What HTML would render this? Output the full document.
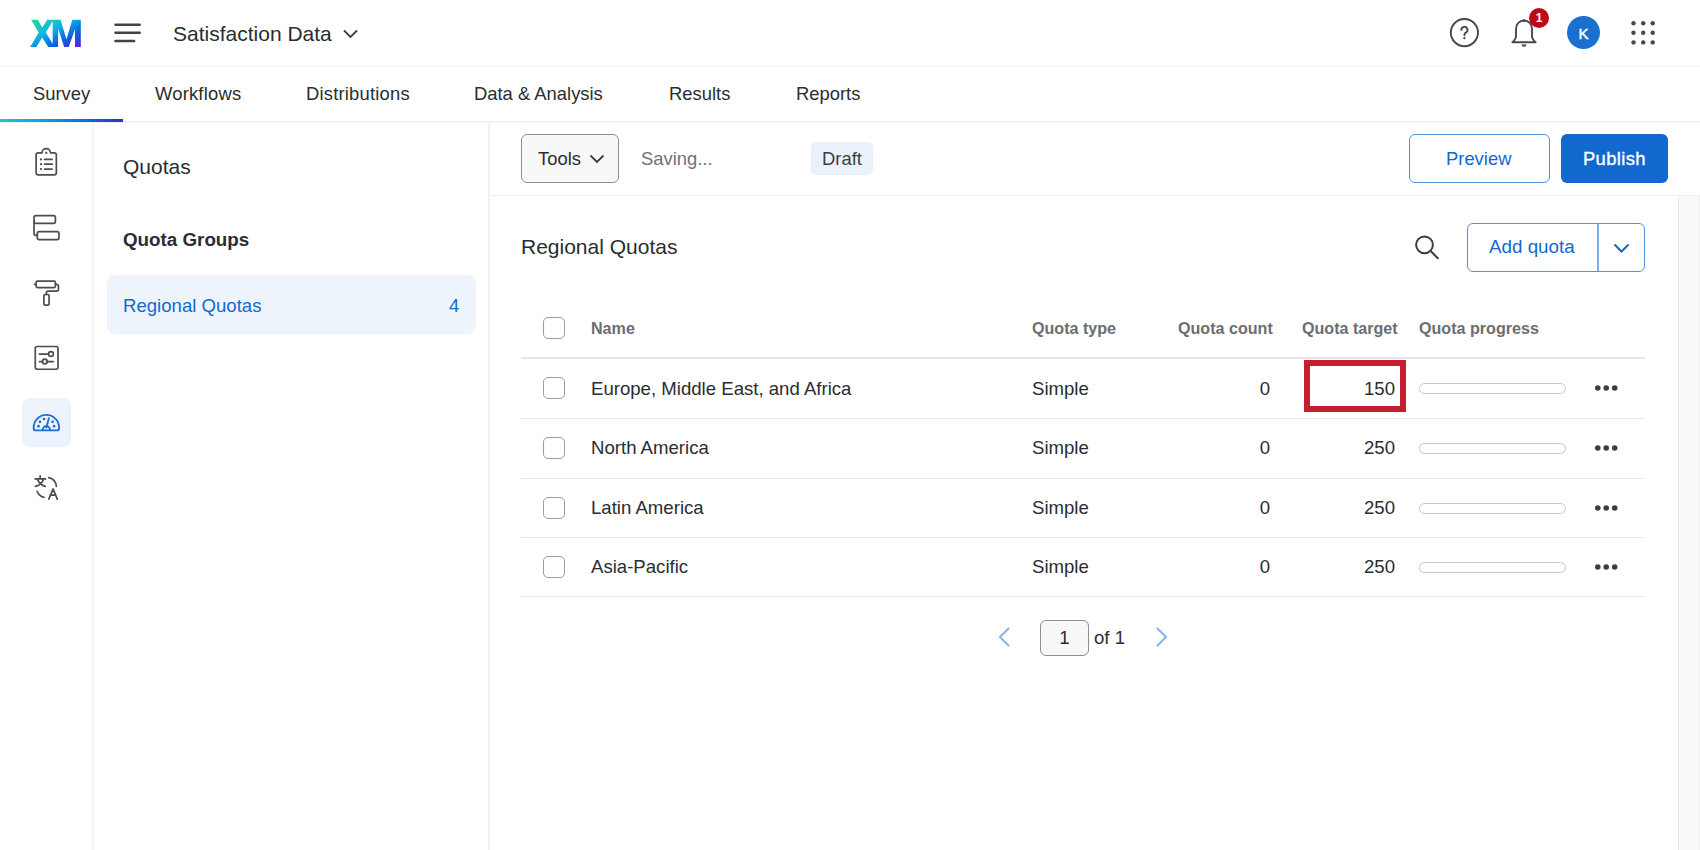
<!DOCTYPE html>
<html><head><meta charset="utf-8">
<style>
*{box-sizing:border-box;margin:0;padding:0}
html,body{width:1700px;height:850px;overflow:hidden;background:#fff;font-family:"Liberation Sans",sans-serif;color:#2a2d31}
.a{position:absolute}
.t{position:absolute;white-space:nowrap;line-height:1}
.hl{position:absolute;height:1px;background:#e9e9ea}
.vl{position:absolute;width:1px;background:#ececec}
svg{position:absolute;overflow:visible}
.cb{width:22px;height:22px;border:1.5px solid #9a9da1;border-radius:5px;background:#fff}
.th{font-size:16.1px;font-weight:700;color:#6b6e72}
.td{font-size:18.6px;color:#2a2d31}
.pb{position:absolute;left:1419px;width:147px;height:11px;border:1px solid #c6c7c9;border-radius:6px;background:#fff}
</style></head><body>
<!-- structural lines -->
<div class="hl" style="left:0;top:65px;width:1700px;height:2px;background:#f5f7f7"></div>
<div class="hl" style="left:0;top:121px;width:1700px;height:2px;background:#f2f2f2"></div>
<div class="a" style="left:0;top:119px;width:123px;height:3px;background:linear-gradient(90deg,#1fc7c9,#05a9ea 30%,#0a6fe0 70%,#3a2bc0)"></div>
<div class="vl" style="left:92px;top:122px;height:728px;width:2px;background:#f4f6f6"></div>
<div class="vl" style="left:488px;top:122px;height:728px;width:2px;background:#f2f2f2"></div>
<div class="hl" style="left:490px;top:195px;width:1210px;background:#efefef"></div>
<div class="a" style="left:1678px;top:196px;width:22px;height:654px;background:#f9f9f9;border-left:1px solid #e8e8e8;border-right:1px solid #efefef"></div>

<!-- header -->
<svg style="left:28px;top:17px" width="56" height="33" viewBox="0 0 1442 850">
<defs><linearGradient id="xmg" x1="0" y1="0" x2="1" y2="1">
<stop offset="0" stop-color="#22dc92"/><stop offset="0.4" stop-color="#0bb5e6"/><stop offset="0.7" stop-color="#0a62de"/><stop offset="1" stop-color="#5a1ee6"/></linearGradient></defs>
<path fill="url(#xmg)" fill-rule="evenodd" d="M80 70 L250 70 L370 270 L495 70 L840 70 L990 580 L1140 70 L1360 70 L1360 770 L1210 770 L1210 310 L1050 770 L930 770 L775 290 L775 770 L520 770 L365 530 L215 770 L55 770 L275 400 Z M460 400 L635 105 L635 690 Z"/>
</svg>
<svg style="left:112px;top:22px" width="32" height="22" viewBox="0 0 32 22">
<path d="M3.5 2.7H27.7M3.5 10.7H27.7M3.5 19H22.1" stroke="#404347" stroke-width="2.5" stroke-linecap="round" fill="none"/>
</svg>
<div class="t" style="left:173px;top:23px;font-size:21px;color:#2a2d31">Satisfaction Data</div>
<svg style="left:343px;top:29px" width="16" height="10" viewBox="0 0 16 10"><path d="M1 1.5L7.5 8L14 1.5" stroke="#3b3e42" stroke-width="1.8" fill="none"/></svg>

<!-- help -->
<svg style="left:1449px;top:18px" width="30" height="30" viewBox="0 0 30 30">
<circle cx="15.4" cy="14.6" r="13.6" stroke="#45484c" stroke-width="1.9" fill="none"/>
<path d="M12.3 11.9a3.1 3.1 0 1 1 4.6 2.7c-1 .5-1.5 1.1-1.5 2.1v.5" stroke="#45484c" stroke-width="1.9" fill="none" stroke-linecap="round"/>
<circle cx="15.4" cy="20.2" r="1.15" fill="#45484c"/>
</svg>
<!-- bell -->
<svg style="left:1510px;top:17px" width="30" height="32" viewBox="0 0 30 32">
<path d="M14 3.5c-4.6 0-8 3.6-8 8.4v6.6c0 2.2-1.6 5.2-3.6 6.7h23.2c-2-1.5-3.6-4.5-3.6-6.7v-6.6c0-4.8-3.4-8.4-8-8.4z" stroke="#45484c" stroke-width="1.9" fill="none" stroke-linejoin="round"/>
<path d="M11.5 27.5a2.5 2.2 0 0 0 5 0z" fill="#45484c"/>
<circle cx="14" cy="3.6" r="1.3" fill="#45484c"/>
</svg>
<div class="a" style="left:1529px;top:8px;width:20px;height:20px;border-radius:50%;background:#bc0b14"></div>
<div class="t" style="left:1529px;top:12px;width:20px;text-align:center;font-size:12px;font-weight:700;color:#fff">1</div>
<div class="a" style="left:1567px;top:16px;width:33px;height:33px;border-radius:50%;background:#1b6fce"></div>
<div class="t" style="left:1567px;top:26px;width:33px;text-align:center;font-size:15px;color:#fff;-webkit-text-stroke:0.5px #fff">K</div>
<svg style="left:1628px;top:18px" width="30" height="30" viewBox="0 0 30 30" fill="#45484c">
<circle cx="5.5" cy="5.3" r="2.2"/><circle cx="15.2" cy="5.3" r="2.2"/><circle cx="24.7" cy="5.3" r="2.2"/>
<circle cx="5.5" cy="14.8" r="2.2"/><circle cx="15.2" cy="14.8" r="2.2"/><circle cx="24.7" cy="14.8" r="2.2"/>
<circle cx="5.5" cy="24.4" r="2.2"/><circle cx="15.2" cy="24.4" r="2.2"/><circle cx="24.7" cy="24.4" r="2.2"/>
</svg>

<!-- tabs -->
<div class="t" style="left:33px;top:85px;font-size:18.4px">Survey</div>
<div class="t" style="left:155px;top:85px;font-size:18.4px;letter-spacing:0.2px">Workflows</div>
<div class="t" style="left:306px;top:85px;font-size:18.4px;letter-spacing:0.2px">Distributions</div>
<div class="t" style="left:474px;top:85px;font-size:18.4px">Data &amp; Analysis</div>
<div class="t" style="left:669px;top:85px;font-size:18.4px">Results</div>
<div class="t" style="left:796px;top:85px;font-size:18.4px">Reports</div>

<!-- left rail icons -->
<svg style="left:26px;top:142px" width="40" height="40" viewBox="0 0 850 850" fill="none" stroke="#4a4d51" stroke-width="36" stroke-linecap="round" stroke-linejoin="round">
<path d="M340 230H262Q215 230 215 277V653Q215 700 262 700H598Q645 700 645 653V277Q645 230 598 230H520A90 90 0 0 0 340 230Z"/>
<path d="M395 370H555M395 472H555M395 575H555"/>
<g fill="#4a4d51" stroke="none"><circle cx="432" cy="232" r="24"/><circle cx="318" cy="370" r="24"/><circle cx="318" cy="472" r="24"/><circle cx="318" cy="575" r="24"/></g>
</svg>
<svg style="left:26px;top:207px" width="40" height="40" viewBox="0 0 850 850" fill="none" stroke="#4a4d51" stroke-width="36" stroke-linecap="round" stroke-linejoin="round">
<rect x="170" y="185" width="455" height="165" rx="40"/>
<rect x="240" y="525" width="460" height="170" rx="40"/>
<path d="M170 300V560Q170 605 215 605H240"/>
</svg>
<svg style="left:26px;top:272px" width="40" height="40" viewBox="0 0 850 850" fill="none" stroke="#4a4d51" stroke-width="36" stroke-linecap="round" stroke-linejoin="round">
<rect x="215" y="192" width="410" height="138" rx="28"/>
<path d="M180 262H215M625 262H650Q690 262 690 302V365Q690 405 650 405H470Q432 405 432 443V478"/>
<rect x="380" y="478" width="110" height="225" rx="24"/>
</svg>
<svg style="left:26px;top:337px" width="40" height="40" viewBox="0 0 850 850" fill="none" stroke="#4a4d51" stroke-width="36" stroke-linecap="round" stroke-linejoin="round">
<rect x="197" y="202" width="483" height="483" rx="40"/>
<path d="M285 362H480M285 522H350M450 522H580"/>
<circle cx="530" cy="362" r="50"/><circle cx="400" cy="522" r="50"/>
</svg>
<div class="a" style="left:22px;top:398px;width:49px;height:49px;border-radius:8px;background:#edf3fc"></div>
<svg style="left:16px;top:393px" width="60" height="60" viewBox="0 0 850 850" fill="none" stroke="#1a6fd1" stroke-width="26" stroke-linecap="round" stroke-linejoin="round">
<path d="M282 530Q250 530 250 498V490A180 180 0 0 1 610 490V498Q610 530 578 530Z"/>
<path d="M430 490L466 358"/>
<path d="M380 520A50 50 0 0 1 480 520"/>
<g fill="#1a6fd1" stroke="none"><circle cx="318" cy="470" r="19"/><circle cx="340" cy="408" r="19"/><circle cx="398" cy="368" r="19"/><circle cx="518" cy="408" r="19"/><circle cx="540" cy="470" r="19"/></g>
</svg>
<svg style="left:26px;top:468px" width="40" height="40" viewBox="0 0 850 850" fill="none" stroke="#4a4d51" stroke-width="36" stroke-linecap="round" stroke-linejoin="round">
<path d="M195 232H415M300 165V232M375 232Q330 360 200 390M240 232Q290 360 410 390"/>
<path d="M485 205A210 210 0 0 1 645 390M235 495A210 210 0 0 0 380 625"/>
<path d="M485 660L575 445L665 660M525 575H630"/>
</svg>

<!-- sidebar -->
<div class="t" style="left:123px;top:156px;font-size:21px">Quotas</div>
<div class="t" style="left:123px;top:231px;font-size:18.8px;font-weight:700">Quota Groups</div>
<div class="a" style="left:107px;top:275px;width:369px;height:59px;border-radius:8px;background:#edf4fc"></div>
<div class="t" style="left:123px;top:297px;font-size:18.6px;color:#1569cc">Regional Quotas</div>
<div class="t" style="left:449px;top:297px;font-size:18.4px;color:#1569cc">4</div>

<!-- toolbar -->
<div class="a" style="left:521px;top:134px;width:98px;height:49px;border:1.5px solid #8b8e92;border-radius:6px;background:#f8f8f8"></div>
<div class="t" style="left:538px;top:150px;font-size:18.4px">Tools</div>
<svg style="left:589px;top:154px" width="16" height="10" viewBox="0 0 16 10"><path d="M1.5 1.5L8 8L14.5 1.5" stroke="#3b3e42" stroke-width="1.8" fill="none"/></svg>
<div class="t" style="left:641px;top:150px;font-size:18.4px;color:#6f7377">Saving...</div>
<div class="a" style="left:811px;top:142px;width:62px;height:33px;border-radius:5px;background:#eaf1fb"></div>
<div class="t" style="left:822px;top:150px;font-size:18.4px;color:#3b3e42">Draft</div>
<div class="a" style="left:1409px;top:134px;width:141px;height:49px;border:1.5px solid #4f93e3;border-radius:6px;background:#fff"></div>
<div class="t" style="left:1446px;top:150px;font-size:18.4px;color:#1169d0">Preview</div>
<div class="a" style="left:1561px;top:134px;width:107px;height:49px;border-radius:6px;background:#1169d0"></div>
<div class="t" style="left:1583px;top:150px;font-size:18.4px;color:#fff;-webkit-text-stroke:0.35px #fff;letter-spacing:0.35px">Publish</div>

<!-- content title -->
<div class="t" style="left:521px;top:236px;font-size:21px">Regional Quotas</div>
<svg style="left:1410px;top:230px" width="32" height="32" viewBox="0 0 32 32" fill="none" stroke="#3b3e42" stroke-width="2" stroke-linecap="round">
<circle cx="14.5" cy="14.8" r="8.4"/><path d="M20.6 21L27.8 28.2"/>
</svg>
<div class="a" style="left:1467px;top:223px;width:178px;height:49px;border:1.5px solid #4f93e3;border-radius:6px;background:#fff"></div>
<div class="a" style="left:1597px;top:224px;width:1.5px;height:47px;background:#7fb0ec"></div>
<div class="t" style="left:1489px;top:238px;font-size:18.8px;color:#1169d0">Add quota</div>
<svg style="left:1613px;top:243px" width="17" height="11" viewBox="0 0 17 11"><path d="M1.5 1.5L8.5 8.5L15.5 1.5" stroke="#1169d0" stroke-width="2" fill="none"/></svg>

<!-- table header -->
<div class="a cb" style="left:543px;top:317px"></div>
<div class="t th" style="left:591px;top:320px">Name</div>
<div class="t th" style="left:1032px;top:320px">Quota type</div>
<div class="t th" style="left:1178px;top:320px">Quota count</div>
<div class="t th" style="left:1302px;top:320px">Quota target</div>
<div class="t th" style="left:1419px;top:320px">Quota progress</div>
<div class="hl" style="left:521px;top:357px;width:1124px;height:2px;background:#e6e6e6"></div>

<div class="a cb" style="left:543px;top:377px"></div>
<div class="t td" style="left:591px;top:380px">Europe, Middle East, and Africa</div>
<div class="t td" style="left:1032px;top:380px">Simple</div>
<div class="t td" style="left:1170px;top:380px;width:100px;text-align:right">0</div>
<div class="t td" style="left:1295px;top:380px;width:100px;text-align:right">150</div>
<div class="pb" style="top:383px"></div>
<svg style="left:1592px;top:385px" width="28" height="6" viewBox="0 0 28 6" fill="#3b3e42"><circle cx="5.8" cy="3" r="2.8"/><circle cx="14.2" cy="3" r="2.8"/><circle cx="22.7" cy="3" r="2.8"/></svg>
<div class="hl" style="left:521px;top:418px;width:1124px;background:#e9e9ea"></div>
<div class="a cb" style="left:543px;top:437px"></div>
<div class="t td" style="left:591px;top:439px">North America</div>
<div class="t td" style="left:1032px;top:439px">Simple</div>
<div class="t td" style="left:1170px;top:439px;width:100px;text-align:right">0</div>
<div class="t td" style="left:1295px;top:439px;width:100px;text-align:right">250</div>
<div class="pb" style="top:443px"></div>
<svg style="left:1592px;top:445px" width="28" height="6" viewBox="0 0 28 6" fill="#3b3e42"><circle cx="5.8" cy="3" r="2.8"/><circle cx="14.2" cy="3" r="2.8"/><circle cx="22.7" cy="3" r="2.8"/></svg>
<div class="hl" style="left:521px;top:478px;width:1124px;background:#e9e9ea"></div>
<div class="a cb" style="left:543px;top:497px"></div>
<div class="t td" style="left:591px;top:499px">Latin America</div>
<div class="t td" style="left:1032px;top:499px">Simple</div>
<div class="t td" style="left:1170px;top:499px;width:100px;text-align:right">0</div>
<div class="t td" style="left:1295px;top:499px;width:100px;text-align:right">250</div>
<div class="pb" style="top:503px"></div>
<svg style="left:1592px;top:505px" width="28" height="6" viewBox="0 0 28 6" fill="#3b3e42"><circle cx="5.8" cy="3" r="2.8"/><circle cx="14.2" cy="3" r="2.8"/><circle cx="22.7" cy="3" r="2.8"/></svg>
<div class="hl" style="left:521px;top:537px;width:1124px;background:#e9e9ea"></div>
<div class="a cb" style="left:543px;top:556px"></div>
<div class="t td" style="left:591px;top:558px">Asia-Pacific</div>
<div class="t td" style="left:1032px;top:558px">Simple</div>
<div class="t td" style="left:1170px;top:558px;width:100px;text-align:right">0</div>
<div class="t td" style="left:1295px;top:558px;width:100px;text-align:right">250</div>
<div class="pb" style="top:562px"></div>
<svg style="left:1592px;top:564px" width="28" height="6" viewBox="0 0 28 6" fill="#3b3e42"><circle cx="5.8" cy="3" r="2.8"/><circle cx="14.2" cy="3" r="2.8"/><circle cx="22.7" cy="3" r="2.8"/></svg>
<div class="hl" style="left:521px;top:596px;width:1124px;background:#e9e9ea"></div>
<div class="a" style="left:1304px;top:360px;width:102px;height:52px;border:6px solid #c41f30"></div>
<svg style="left:996px;top:626px" width="16" height="22" viewBox="0 0 16 22"><path d="M12.5 2.5L4 11L12.5 19.5" stroke="#8bb7ee" stroke-width="2.2" fill="none" stroke-linecap="round"/></svg>
<div class="a" style="left:1040px;top:620px;width:49px;height:36px;border:1.5px solid #8b8e92;border-radius:6px;background:#f8f8f8"></div>
<div class="t td" style="left:1040px;top:629px;width:49px;text-align:center">1</div>
<div class="t td" style="left:1094px;top:629px">of 1</div>
<svg style="left:1154px;top:626px" width="16" height="22" viewBox="0 0 16 22"><path d="M3.5 2.5L12 11L3.5 19.5" stroke="#8bb7ee" stroke-width="2.2" fill="none" stroke-linecap="round"/></svg>
</body></html>
